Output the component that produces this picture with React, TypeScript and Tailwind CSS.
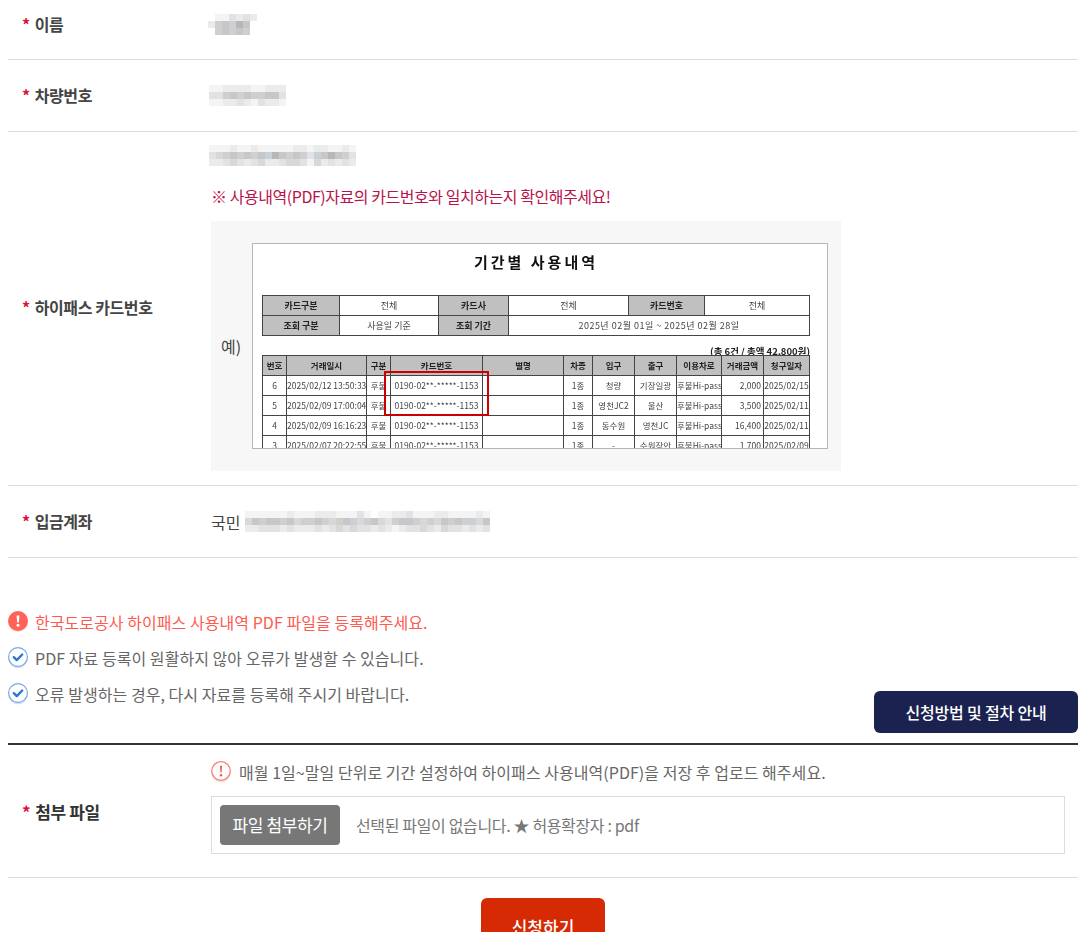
const font = { fontFamily: '"Noto Sans CJK KR", "Noto Sans", sans-serif' };

const palette = ['#ffffff', '#f4f4f4', '#ebebeb', '#e2e2e4', '#d8d8da', '#cfcfd2', '#c6c7c9', '#d3cfca', '#c9d0d6', '#b8b6b6'];

function Mosaic({ rows, cell = 7, h = 7 }: { rows: string[]; cell?: number; h?: number }) {
  const cols = Math.max(...rows.map((r) => r.length));
  return (
    <svg width={cols * cell} height={rows.length * h} className="block shrink-0" shapeRendering="crispEdges">
      {rows.map((r, y) =>
        r.split('').map((c, x) => (
          <rect key={`${x}-${y}`} x={x * cell} y={y * h} width={cell} height={h} fill={palette[Number(c)]} />
        )),
      )}
    </svg>
  );
}

function Star() {
  return <span className="mr-[5px] text-[#e0103c]">*</span>;
}

function Row({ label, className, labelClass = 'pb-[2px]', children }: { label: string; className: string; labelClass?: string; children: React.ReactNode }) {
  return (
    <div className={`flex items-center border-b border-[#dddddd] ${className}`}>
      <div className={`w-[203px] shrink-0 pl-[14px] text-[16px] font-bold tracking-[-0.4px] text-[#444444] ${labelClass}`}>
        <Star />
        {label}
      </div>
      <div className="min-w-0 flex-1">{children}</div>
    </div>
  );
}

function AlertSolid() {
  return (
    <svg width="20" height="22" viewBox="0 0 20 22" className="shrink-0">
      <ellipse cx="10" cy="11.5" rx="9.5" ry="9.5" fill="#ffd9d4" />
      <circle cx="10" cy="10" r="10" fill="#ff6257" />
      <path d="M8.6 4.5h2.8l-.5 7h-1.800z" fill="#fff" />
      <circle cx="10" cy="14.300" r="1.500" fill="#fff" />
    </svg>
  );
}

function CheckRound() {
  return (
    <svg width="20" height="22" viewBox="0 0 20 22" className="shrink-0">
      <ellipse cx="10" cy="11.800" rx="9.500" ry="9.500" fill="#cfe0f7" />
      <circle cx="10" cy="10" r="9.400" fill="#fff" stroke="#7aa7e6" strokeWidth="1.200" />
      <path d="M5.800 10.200l3 2.900 5.400-5.600" fill="none" stroke="#2f74d8" strokeWidth="2.400" strokeLinecap="round" strokeLinejoin="round" />
    </svg>
  );
}

function AlertOutline() {
  return (
    <svg width="20" height="22" viewBox="0 0 20 22" className="shrink-0">
      <ellipse cx="10" cy="11.800" rx="9.500" ry="9.500" fill="#ffdcd8" />
      <circle cx="10" cy="10" r="9.300" fill="#fff" stroke="#ff7d74" strokeWidth="1.300" />
      <path d="M9 4.800h2l-.4 6.800H9.400z" fill="#f0574c" />
      <circle cx="10" cy="14.300" r="1.200" fill="#f0574c" />
    </svg>
  );
}

const th = 'border border-[#444444] bg-[#c0c0c0] p-0 text-center font-bold text-[#222222]';
const td = 'border border-[#444444] bg-white p-0 text-center font-normal text-[#444444]';
const th2 = 'border border-[#444444] bg-[#c0c0c0] p-0 pb-[2px] text-center font-bold text-[#222222]';
const td2 = 'border border-[#444444] bg-white p-0 pb-[2px] text-center font-normal text-[#444444]';

const usage = [
  ['6', '2025/02/12 13:50:33', '1종', '청량', '기장일광', '2,000', '2025/02/15'],
  ['5', '2025/02/09 17:00:04', '1종', '영천JC2', '울산', '3,500', '2025/02/11'],
  ['4', '2025/02/09 16:16:23', '1종', '동수원', '영천JC', '16,400', '2025/02/11'],
  ['3', '2025/02/07 20:22:55', '1종', '-', '수원장안', '1,700', '2025/02/09'],
];

function Statement() {
  return (
    <div className="relative h-[206px] w-[576px] shrink-0 overflow-hidden border border-[#b5b5b5] bg-white blur-[0.25px]">
      <div className="mr-[8px] pt-[6px] text-center text-[15px] font-bold leading-[24px] tracking-[3px] text-[#111111]">기간별 사용내역</div>
      <div className="ml-[9px] mt-[21px] w-[548px]">
        <table className="w-full table-fixed border-collapse text-[9px] leading-[18px]">
          <colgroup>
            <col className="w-[77px]" />
            <col className="w-[99px]" />
            <col className="w-[70px]" />
            <col className="w-[120px]" />
            <col className="w-[76px]" />
            <col />
          </colgroup>
          <tbody>
            <tr className="h-[20px]">
              <th className={th}>카드구분</th>
              <td className={td}>전체</td>
              <th className={th}>카드사</th>
              <td className={td}>전체</td>
              <th className={th}>카드번호</th>
              <td className={td}>전체</td>
            </tr>
            <tr className="h-[20px]">
              <th className={th}>조회 구분</th>
              <td className={td}>사용일 기준</td>
              <th className={th}>조회 기간</th>
              <td className={`${td} tracking-[0.5px]`} colSpan={3}>2025년 02월 01일 ~ 2025년 02월 28일</td>
            </tr>
          </tbody>
        </table>
        <div className="mt-[10px] h-[9px] overflow-hidden text-right text-[9.5px] font-bold leading-[11px] text-[#222222]">(총 6건 / 총액 42,800원)</div>
        <table className="w-full table-fixed border-collapse text-[8.5px] leading-[16px]">
          <colgroup>
            <col className="w-[24px]" />
            <col className="w-[80px]" />
            <col className="w-[24px]" />
            <col className="w-[92px]" />
            <col className="w-[81px]" />
            <col className="w-[29px]" />
            <col className="w-[42px]" />
            <col className="w-[42px]" />
            <col className="w-[45px]" />
            <col className="w-[42px]" />
            <col />
          </colgroup>
          <thead>
            <tr className="h-[20px]">
              {['번호', '거래일시', '구분', '카드번호', '별명', '차종', '입구', '출구', '이용차로', '거래금액', '청구일자'].map((t) => (
                <th key={t} className={th2}>{t}</th>
              ))}
            </tr>
          </thead>
          <tbody>
            {usage.map((r) => (
              <tr key={r[0]} className="h-[20px]">
                <td className={td2}>{r[0]}</td>
                <td className={`${td2} whitespace-nowrap`}>{r[1]}</td>
                <td className={td2}>후불</td>
                <td className={`${td2} whitespace-nowrap`}>0190-02**-*****-1153</td>
                <td className={td2}></td>
                <td className={td2}>{r[2]}</td>
                <td className={td2}>{r[3]}</td>
                <td className={td2}>{r[4]}</td>
                <td className={`${td2} whitespace-nowrap`}>후불Hi-pass</td>
                <td className={`${td2} pr-[2px] text-right`}>{r[5]}</td>
                <td className={`${td2} whitespace-nowrap`}>{r[6]}</td>
              </tr>
            ))}
          </tbody>
        </table>
      </div>
      <div className="absolute left-[131px] top-[127px] h-[45px] w-[105px] border-2 border-[#cc0000]" />
    </div>
  );
}

export default function App() {
  return (
    <div style={font} className="h-[932px] overflow-hidden bg-white">
      <div className="-mt-[11px] mx-[8px] w-[1070px]">
        <Row label="이름" className="h-[71px]" labelClass="pb-[1px]">
          <div className="-ml-[3px]">
            <Mosaic rows={['0113232', '2565960', '0565650']} />
          </div>
        </Row>
        <Row label="차량번호" className="h-[72px]">
          <div className="-ml-[2px]">
            <Mosaic rows={['11222211222', '33567655663', '11223213221']} />
          </div>
        </Row>
        <Row label="하이패스 카드번호" className="h-[354px]" labelClass="pb-[4px]">
          <div className="flex flex-col pt-[1px]">
            <div className="-ml-[2px] -mt-[2px]">
              <Mosaic rows={['111211211111221221121', '345656768967653869653', '223432342234431423232']} />
            </div>
            <div className="mt-[18px] text-[16px] font-normal leading-[24px] tracking-[-0.45px] text-[#b8124a]">※ 사용내역(PDF)자료의 카드번호와 일치하는지 확인해주세요!</div>
            <div className="mt-[13px] flex h-[250px] w-[630px] items-center bg-[#f7f7f7] pl-[10px]">
              <span className="w-[31px] shrink-0 text-[16px] text-[#444444]">예)</span>
              <Statement />
            </div>
          </div>
        </Row>
        <Row label="입금계좌" className="h-[72px]">
          <div className="flex items-center gap-[5px] text-[16px] text-[#444444]">
            <span>국민</span>
            <Mosaic rows={['11111121112221113101122311122111121', '46566564556747654564356654746565846', '22333232223234343323212334324332323']} />
          </div>
        </Row>

        <div className="flex items-end justify-between border-b-2 border-[#333333] pb-[10px] pt-[53px]">
          <ul className="flex flex-col gap-[14px] pb-[28px] text-[16px] leading-[22px] tracking-[0.05px] text-[#666666]">
            <li className="flex items-center gap-[7px] text-[#ff5a50]"><AlertSolid />한국도로공사 하이패스 사용내역 PDF 파일을 등록해주세요.</li>
            <li className="flex items-center gap-[7px]"><CheckRound />PDF 자료 등록이 원활하지 않아 오류가 발생할 수 있습니다.</li>
            <li className="flex items-center gap-[7px]"><CheckRound />오류 발생하는 경우, 다시 자료를 등록해 주시기 바랍니다.</li>
          </ul>
          <button className="h-[42px] w-[204px] rounded-[6px] bg-[#1b2250] text-[16px] font-medium tracking-[-0.2px] text-white">신청방법 및 절차 안내</button>
        </div>

        <div className="flex h-[133px] items-center border-b border-[#dddddd]">
          <div className="w-[203px] shrink-0 pl-[14px] pt-[1px] text-[17px] font-bold tracking-[-0.4px] text-[#333333]">
            <Star />
            첨부 파일
          </div>
          <div className="min-w-0 flex-1 pb-[7px]">
            <div className="flex items-center gap-[8px] text-[16px] leading-[22px] tracking-[0.04px] text-[#666666]">
              <AlertOutline />
              매월 1일~말일 단위로 기간 설정하여 하이패스 사용내역(PDF)을 저장 후 업로드 해주세요.
            </div>
            <div className="mt-[13px] flex h-[58px] w-[854px] items-center border border-[#dddddd] pl-[8px] text-[16px] tracking-[-0.35px] text-[#777777]">
              <span className="flex h-[40px] w-[120px] items-center justify-center rounded-[4px] bg-[#777777] text-[17px] font-normal tracking-[-0.4px] text-white">파일 첨부하기</span>
              <span className="ml-[16px]">선택된 파일이 없습니다. ★ 허용확장자 : pdf</span>
            </div>
          </div>
        </div>

        <div className="mt-[20px] flex justify-center">
          <button className="h-[58px] w-[124px] rounded-[6px] bg-[#d52a04] text-[17px] font-medium text-white">신청하기</button>
        </div>
      </div>
    </div>
  );
}
